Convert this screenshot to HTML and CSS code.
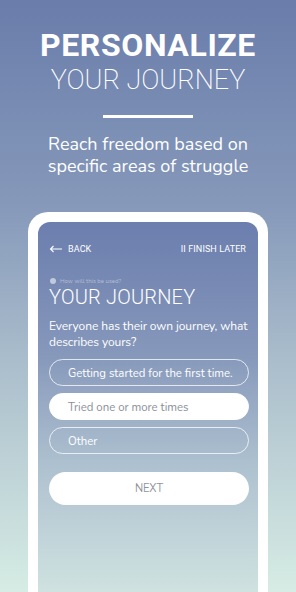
FILE: index.html
```html
<!DOCTYPE html>
<html lang="en">
<head>
    <meta charset="UTF-8">
    <meta name="viewport" content="width=device-width, initial-scale=1.0">
    <title>Personalize your journey</title>
    <link rel="stylesheet" href="styles.css">
</head>
<body>
    <header class="promo">
        <h1 class="promo-title">PERSONALIZE</h1>
        <h2 class="promo-sub">YOUR JOURNEY</h2>
        <div class="promo-rule"></div>
        <p class="promo-text">Reach freedom based on<br>specific areas of struggle</p>
    </header>
    <div class="phone">
        <div class="screen">
            <div class="topbar">
                <span class="back">
                    <svg width="14" height="8" viewBox="0 0 14 8"><path d="M13 4H1.5M4.5 1L1.5 4l3 3" fill="none" stroke="#fff" stroke-width="1.1"/></svg>
                    BACK
                </span>
                <span class="later">II FINISH LATER</span>
            </div>
            <div class="hint"><span class="hint-dot"></span>How will this be used?</div>
            <h3 class="screen-title">YOUR JOURNEY</h3>
            <p class="question">Everyone has their own journey, what describes yours?</p>
            <div class="options">
                <div class="option">Getting started for the first time.</div>
                <div class="option selected">Tried one or more times</div>
                <div class="option">Other</div>
            </div>
            <div class="next">NEXT</div>
        </div>
    </div>
</body>
</html>
```

FILE: styles.css
```css
body {
    margin: 0;
    width: 296px;
    height: 592px;
    overflow: hidden;
    background: linear-gradient(180deg, #6a7dab 0%, #8699ba 35%, #a9bccb 60%, #d6ece4 100%);
    font-family: "Nunito", "Lato", sans-serif;
    color: #fff;
    display: flex;
    flex-direction: column;
    align-items: center;
}
.promo {
    text-align: center;
    padding-top: 27px;
}
.promo-title {
    margin: 0;
    font-family: Roboto, sans-serif;
    font-weight: 700;
    font-size: 32px;
    letter-spacing: 0.6px;
    line-height: 36px;
}
.promo-sub {
    margin: 0;
    font-family: Roboto, sans-serif;
    font-weight: 200;
    font-size: 27px;
    letter-spacing: 0;
    line-height: 34px;
}
.promo-rule {
    width: 90px;
    height: 3px;
    background: #fff;
    margin: 18px auto 0;
}
.promo-text {
    margin: 15px 0 0;
    font-size: 18px;
    line-height: 22px;
    font-weight: 400;
}
.phone {
    margin-top: 35px;
    width: 220px;
    flex: 1;
    border: 10px solid #fff;
    border-bottom: none;
    border-radius: 20px 20px 0 0;
    background: #fff;
}
.screen {
    height: 100%;
    border-radius: 12px 12px 0 0;
    background: linear-gradient(180deg, #6b7eae 0%, #8597ba 35%, #adc0cf 65%, #cfe2e0 100%);
    padding: 0 9px 0 11px;
    box-sizing: border-box;
}
.topbar {
    display: flex;
    justify-content: space-between;
    align-items: center;
    padding: 22px 3px 0 0;
    font-family: Roboto, sans-serif;
    font-size: 9px;
    letter-spacing: 0.1px;
}
.back {
    display: flex;
    align-items: center;
    gap: 5px;
}
.hint {
    margin-top: 23px;
    display: flex;
    align-items: center;
    gap: 4px;
    font-size: 6px;
    color: rgba(255, 255, 255, 0.45);
    padding-left: 1px;
}
.hint-dot {
    width: 6px;
    height: 6px;
    border-radius: 50%;
    background: rgba(255, 255, 255, 0.55);
}
.screen-title {
    margin: 0;
    font-family: Roboto, sans-serif;
    font-weight: 300;
    font-size: 20px;
    line-height: 24px;
    letter-spacing: 0.2px;
}
.question {
    margin: 9px -10px 0 0;
    font-size: 12px;
    line-height: 16px;
    letter-spacing: -0.1px;
}
.options {
    margin-top: 9px;
    display: flex;
    flex-direction: column;
    gap: 7px;
}
.option {
    height: 27px;
    border: 1px solid rgba(255, 255, 255, 0.75);
    border-radius: 14px;
    box-sizing: border-box;
    display: flex;
    align-items: center;
    padding-left: 18px;
    font-size: 11.4px;
}
.option.selected {
    background: #fff;
    color: #8a8e98;
    border-color: #fff;
}
.next {
    margin-top: 18px;
    height: 33px;
    border-radius: 17px;
    background: #fff;
    color: #8f939c;
    font-size: 11px;
    display: flex;
    align-items: center;
    justify-content: center;
}
```
